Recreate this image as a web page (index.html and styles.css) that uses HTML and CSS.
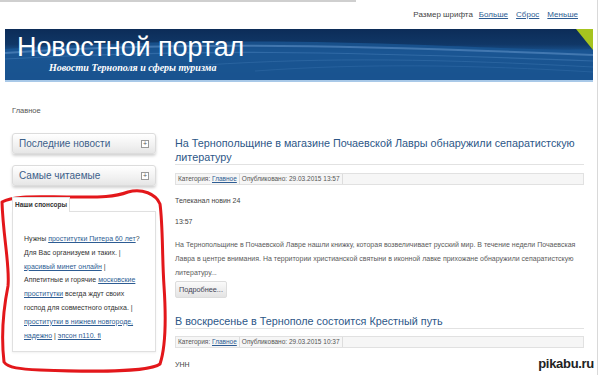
FILE: index.html
```html
<!DOCTYPE html>
<html lang="ru">
<head>
<meta charset="utf-8">
<title>Новостной портал</title>
<link rel="stylesheet" href="styles.css">
</head>
<body>
<div class="page">
  <div class="topline"></div>
  <div class="fontsize"><span>Размер шрифта</span><a href="#">Больше</a><a href="#">Сброс</a><a href="#">Меньше</a></div>
  <header class="banner">
    <svg class="waves" viewBox="0 0 588 51" preserveAspectRatio="none" aria-hidden="true">
      <path d="M0,20 C120,12 260,10 420,16 C500,19 560,22 588,20 L588,51 L0,51 Z" fill="#1a5694" opacity="0.8"/>
      <path d="M0,24 C150,14 300,14 588,26" stroke="#5d8fc4" stroke-width="2" fill="none" opacity="0.6"/>
      <path d="M0,30 C180,20 330,22 588,32" stroke="#3f78b3" stroke-width="1.2" fill="none" opacity="0.6"/>
      <path d="M200,36 C320,28 440,30 588,38" stroke="#3a73ae" stroke-width="1" fill="none" opacity="0.5"/>
      <path d="M250,42 C360,34 470,36 588,43" stroke="#3a73ae" stroke-width="1" fill="none" opacity="0.4"/>
    </svg>
    <h1 class="site-title">Новостной портал</h1>
    <div class="site-sub">Новости Тернополя и сферы туризма</div>
  </header>
  <div class="crumbs">Главное</div>
  <div class="columns">
    <aside class="side">
      <div class="panel"><span>Последние новости</span><i class="plus">+</i></div>
      <div class="panel"><span>Самые читаемые</span><i class="plus">+</i></div>
      <div class="tab">Наши спонсоры</div>
      <div class="sponsors">
        Нужны <a href="#">проститутки Питера 60 лет</a>?<br>
        Для Вас организуем и таких. |<br>
        <a href="#">красивый минет онлайн</a> |<br>
        Аппетитные и горячие <a href="#">московские<br>проститутки</a> всегда ждут своих<br>
        господ для совместного отдыха. |<br>
        <a href="#">проститутки в нижнем новгороде,<br>надежно</a> | <a href="#">эпсон n110. fi</a>
      </div>
    </aside>
    <main class="main">
      <article class="item">
        <h2 class="title">На Тернопольщине в магазине Почаевской Лавры обнаружили сепаратистскую литературу</h2>
        <div class="meta"><span>Категория: <a href="#">Главное</a></span><span>Опубликовано: 29.03.2015 13:57</span></div>
        <p class="txt">Телеканал новин 24</p>
        <p class="txt">13:57</p>
        <p class="txt para">На Тернопольщине в Почаевской Лавре нашли книжку, которая возвеличивает русский мир. В течение недели Почаевская<br>Лавра в центре внимания. На территории христианской святыни в иконной лавке прихожане обнаружили сепаратистскую<br>литературу...</p>
        <a class="more" href="#">Подробнее...</a>
      </article>
      <article class="item second">
        <h2 class="title">В воскресенье в Тернополе состоится Крестный путь</h2>
        <div class="meta"><span>Категория: <a href="#">Главное</a></span><span>Опубликовано: 29.03.2015 10:37</span></div>
        <p class="txt unn">УНН</p>
      </article>
    </main>
  </div>
  <svg class="scribble" viewBox="0 0 170 190" aria-hidden="true">
    <path d="M2,16 C14,9 40,11 70,11 C95,11 112,12 128,6 C142,2 156,8 160,18 C163,40 162,70 164,100 C166,130 166,160 160,178 C150,186 90,186 40,184 C20,183 8,182 4,176 C1,150 4,120 8,100 C10,80 3,50 2,16 Z" fill="none" stroke="#e3171b" stroke-width="3" stroke-linejoin="round"/>
  </svg>
  <div class="pikabu">pikabu.ru</div>
</div>
</body>
</html>
```
FILE: styles.css
```css
html, body { margin: 0; padding: 0; background: #fff; }
body { font-family: "Liberation Sans", Arial, sans-serif; color: #444; }
a { color: #2d5c93; }

.page {
  width: 597px;
  height: 375px;
  border-right: 1px solid #d9d9d9;
  position: relative;
  overflow: hidden;
}
.topline { width: 356px; height: 2px; background: #cfcfcf; }

.fontsize {
  padding: 8px 19px 9px 0;
  height: 10px;
  line-height: 10px;
  font-size: 8px;
  display: flex;
  justify-content: flex-end;
  color: #444;
}
.fontsize a { color: #2d5c93; margin-left: 6px; }
.fontsize a + a { margin-left: 8px; }

.banner {
  position: relative;
  margin-left: 5px;
  width: 588px;
  height: 51px;
  border-bottom: 2px solid #a9c9e8;
  background: linear-gradient(180deg, #0c2c58 0%, #103766 30%, #1a5390 45%, #184c86 70%, #164780 100%);
  overflow: hidden;
}
.banner::after {
  content: "";
  position: absolute;
  right: 0;
  top: 0;
  border-top: 21px solid #a6c41f;
  border-left: 17px solid transparent;
}
.waves { position: absolute; left: 0; top: 0; width: 100%; height: 100%; }
.site-title {
  position: relative;
  margin: 0;
  padding: 5px 0 0 12px;
  font-weight: normal;
  font-size: 27px;
  line-height: 26px;
  color: #fff;
  letter-spacing: -0.1px;
}
.site-sub {
  position: relative;
  margin: 2px 0 0 44px;
  font-family: "Liberation Serif", "Times New Roman", serif;
  font-style: italic;
  font-weight: bold;
  font-size: 10px;
  line-height: 12px;
  color: #fff;
}

.crumbs {
  margin: 24px 0 0 12px;
  font-size: 7.5px;
  line-height: 10px;
  color: #555;
}

.columns { display: flex; align-items: flex-start; }
.side { margin: 17px 0 0 12px; width: 144px; flex: none; }
.main { margin: 20px 0 0 19px; width: 409px; flex: none; }

.panel {
  height: 19px;
  display: flex;
  align-items: center;
  justify-content: space-between;
  padding: 0 6px 0 6px;
  border: 1px solid #dcdcdc;
  border-radius: 3px;
  background: linear-gradient(180deg, #ffffff 0%, #f1f1f1 60%, #e6e6e6 100%);
  box-shadow: 0 2px 3px rgba(0,0,0,0.18);
  font-size: 10px;
  color: #3c6089;
  margin-bottom: 11px;
}
.plus {
  font-style: normal;
  width: 6px;
  height: 6px;
  border: 1px solid #999;
  font-size: 7px;
  line-height: 6px;
  text-align: center;
  color: #555;
  background: #fff;
}
.tab {
  margin-top: 4px;
  width: 54px;
  height: 14px;
  border: 1px solid #e0e0e0;
  border-bottom: none;
  font-size: 6.5px;
  font-weight: bold;
  line-height: 13px;
  padding-left: 2px;
  color: #333;
  background: #fff;
  position: relative;
  z-index: 1;
  margin-bottom: -1px;
}
.sponsors {
  height: 106px;
  border: 1px solid #e0e0e0;
  padding: 20px 0 13px 11px;
  box-shadow: 0 1px 2px rgba(0,0,0,0.06);
  font-size: 7px;
  line-height: 13.8px;
  color: #333;
}

.title {
  margin: 0;
  font-weight: normal;
  font-size: 10.8px;
  line-height: 14px;
  color: #2d5787;
  padding-bottom: 0;
  border-bottom: 1px solid #e2e2e2;
}
.meta {
  margin-top: 8px;
  height: 10px;
  border: 1px solid #e1e1e1;
  background: #f6f6f6;
  display: flex;
  font-size: 6.5px;
  line-height: 10px;
  color: #555;
}
.meta span { padding: 0 2px; border-right: 1px solid #ddd; }
.txt { margin: 11px 0 0 0; font-size: 7px; line-height: 10px; color: #444; }
.para { line-height: 14px; color: #5a5a5a; white-space: nowrap; }
.more {
  display: block;
  width: fit-content;
  height: 15px;
  margin-top: 1px;
  padding: 0 3px;
  border: 1px solid #ddd;
  border-radius: 2px;
  background: linear-gradient(180deg, #fafafa, #e4e4e4);
  font-size: 7.3px;
  line-height: 15px;
  color: #445;
  text-decoration: none;
}
.second { margin-top: 16px; }
.second .meta { margin-top: 7px; }
.unn { margin-top: 12px; }

.scribble {
  position: absolute;
  left: 0;
  top: 186px;
  width: 170px;
  height: 190px;
}
.pikabu {
  position: absolute;
  right: 3px;
  bottom: 5px;
  font-size: 13px;
  line-height: 13px;
  font-weight: bold;
  color: #222;
  letter-spacing: -0.3px;
  text-shadow: 1px 0 0 #fff, -1px 0 0 #fff, 0 1px 0 #fff, 0 -1px 0 #fff, 0 0 2px #fff;
}
```
